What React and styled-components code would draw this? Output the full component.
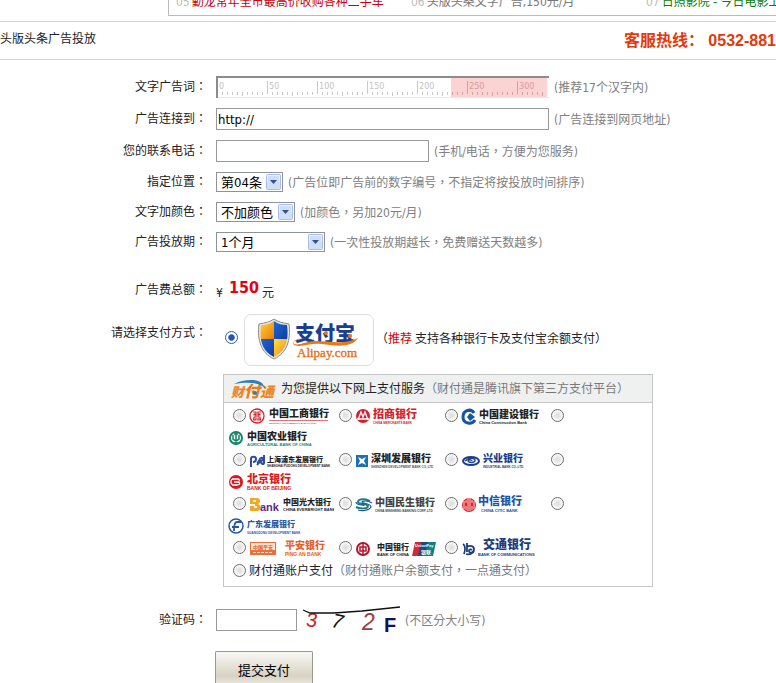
import React, { useState } from "react";
import styled, { createGlobalStyle } from "styled-components";

const GlobalStyle = createGlobalStyle`
  * {
    box-sizing: border-box;
  }
  body {
    margin: 0;
    background: #fff;
    color: #222;
    font-family: "DejaVu Sans Condensed", "Open Sans", "Noto Sans CJK TC", sans-serif;
    font-size: 12px;
    line-height: 16px;
    overflow-x: hidden;
  }
  input, select, button {
    font-family: inherit;
  }
`;

const Page = styled.div`
  overflow: hidden;
  white-space: nowrap;
`;

const AdStrip = styled.div`
  display: grid;
  grid-template-columns: repeat(3, 235px);
  align-content: end;
  height: 16px;
  margin-left: 168px;
  padding: 0 0 5px 7px;
  border: 1px solid #bbb;
  border-width: 0 0 1px 1px;
`;

const AdLink = styled.a`
  display: flex;
  gap: 2px;
  color: ${(props) => props.color};
  text-decoration: none;
`;

const AdNumber = styled.span`
  color: #bbb;
`;

const TitleBar = styled.header`
  display: flex;
  justify-content: space-between;
  align-items: center;
  height: 39px;
  margin-top: 5px;
  border: 1px solid #d5d5d5;
  border-width: 1px 0;
`;

const Title = styled.h1`
  margin: 0 0 4px;
  font-size: 12px;
  font-weight: normal;
`;

const Hotline = styled.strong`
  color: #e23a0c;
  font-family: "Liberation Sans", "Noto Sans CJK SC", sans-serif;
  font-size: 16px;
  line-height: 20px;
`;

const Form = styled.form`
  display: flex;
  flex-direction: column;
  gap: 10px;
  padding: 16px 0;
`;

const Row = styled.div`
  display: grid;
  grid-template-columns: 207px 1fr;
  column-gap: 9px;
  align-items: ${(props) => props.$align || "center"};
  margin-top: ${(props) => props.$top || 0}px;
`;

const Label = styled.label`
  padding-top: ${(props) => props.$top || 0}px;
  text-align: right;
`;

const Field = styled.div`
  display: flex;
  align-items: center;
  gap: 5px;
`;

const Hint = styled.span`
  padding-top: 1px;
  color: #808080;
`;

const TextInput = styled.input`
  width: ${(props) => props.$width}px;
  height: 22px;
  padding: 0 1px;
  border: 1px solid #999;
  border-radius: 0;
  background: #fff;
  color: #000;
  font-size: 13px;
`;

const Stack = styled.span`
  display: inline-grid;
  align-items: center;
  > * {
    grid-area: 1 / 1;
  }
`;

const RulerInput = styled(TextInput)`
  border: 0 solid #8c8c8c;
  border-width: 2px 0 0 2px;
  background: transparent;
`;

const RulerSvg = styled.svg`
  margin: 2px 0 0 2px;
`;

const Select = styled.select`
  appearance: none;
  width: ${(props) => props.$width}px;
  height: 20px;
  padding: 0 20px 0 4px;
  border: 1px solid #8e9299;
  border-radius: 0;
  background: #fff;
  color: #000;
  font-size: 13px;
`;

const SelectArrow = styled.svg`
  justify-self: end;
  margin-right: 2px;
  pointer-events: none;
`;

const Total = styled.div`
  display: flex;
  align-items: center;
  gap: 3px;
  height: 26px;
`;

const Currency = styled.span`
  padding-top: 5px;
`;

const Price = styled.strong`
  padding: 0 0 5px 3px;
  color: #e60012;
  font-size: 16px;
  line-height: 18px;
`;

const AlipayRow = styled.div`
  display: flex;
  align-items: center;
`;

const Radio = styled.input`
  appearance: none;
  flex: none;
  width: 13px;
  height: 13px;
  margin: 0 3px 0 5px;
  border: 1px solid #6c6c6c;
  border-radius: 50%;
  background: radial-gradient(#e2e2e2 20%, #fff 75%);
  &:checked {
    border-color: #3c5a96;
    background: radial-gradient(#2456b4 35%, #fff 48%);
  }
`;

const AlipayRadio = styled(Radio)`
  margin: 0 6px 6px 9px;
`;

const AlipayCard = styled.label`
  display: flex;
  width: 130px;
  height: 52px;
  border: 1px solid #ddd;
  border-radius: 7px;
`;

const Note = styled.span`
  padding: 0 0 3px 2px;
`;

const Red = styled.span`
  margin-right: 3px;
  color: #d60000;
`;

const Panel = styled.section`
  max-width: 430px;
  margin: 8px 0 0 7px;
  border: 1px solid #c6c6c6;
`;

const PanelHeader = styled.div`
  display: flex;
  align-items: center;
  height: 28px;
  padding-left: 6px;
  border-bottom: 1px solid #c6c6c6;
  background: #eff1f0;
`;

const Gray = styled.span`
  color: #777;
`;

const BankRow = styled.div`
  display: flex;
  flex-wrap: wrap;
  padding: 0 5px 0 4px;
`;

const BankList = styled.div`
  padding-top: 2px;
`;

const RadioCell = styled.span`
  display: flex;
  align-items: center;
  height: 22px;
  padding-bottom: 1px;
`;

const LogoLabel = styled.label`
  display: flex;
  width: 85px;
  height: 22px;
`;

const AccountRow = styled.div`
  display: flex;
  align-items: center;
  height: 27px;
  padding: 0 4px 4px;
`;

const SubmitButton = styled.button`
  justify-self: start;
  width: 98px;
  height: 36px;
  margin-left: -1px;
  border: 1px solid #9a9890;
  border-radius: 1px;
  background: linear-gradient(#f8f7f4, #e4e0d6 45%, #d8d2c2 70%, #efece4);
  color: #000;
  font-size: 13px;
`;

function Ruler() {
  const ticks = Array.from({ length: 65 }, (_, i) => i * 5 + 4);
  return (
    <RulerSvg width="331" height="20" aria-hidden="true">
      <path d="M0 19.5H331" stroke="#e8e8e8" />
      <rect x="233" y="0" width="96" height="19" fill="#fbd3d3" />
      {ticks.map((x) => {
        const major = (x + 1) % 50 === 0;
        return (
          <rect
            key={x}
            x={x}
            y={major ? 3 : 14}
            width="1"
            height={major ? 13 : (x + 1) % 25 === 0 ? 4 : 3}
            fill={x > 233 ? "#d8a0a0" : "#c8c8c8"}
          />
        );
      })}
      {[0, 50, 100, 150, 200, 250, 300].map((n) => (
        <text
          key={n}
          x={n + 1}
          y="11"
          fontSize="9"
          fontFamily="DejaVu Sans Condensed, Open Sans, sans-serif"
          fill={n > 240 ? "#d79c9c" : "#c4c4c4"}
        >
          {n}
        </text>
      ))}
    </RulerSvg>
  );
}

function Dropdown({ id, width, options }) {
  return (
    <Stack>
      <Select id={id} $width={width}>
        {options.map((option) => (
          <option key={option}>{option}</option>
        ))}
      </Select>
      <SelectArrow width="15" height="16">
        <rect x="0.5" y="0.5" width="14" height="15" rx="1" fill="#cfdefb" stroke="#a9bdeb" />
        <path d="M1.5 8V1.5H13.5V8" fill="none" stroke="#e9f0fe" />
        <path d="M4 6H11L7.5 10Z" fill="#33508c" />
      </SelectArrow>
    </Stack>
  );
}

function AlipayLogo() {
  return (
    <svg width="128" height="50" role="img" aria-label="支付宝 Alipay.com">
      <defs>
        <linearGradient id="gold" x2="1" y2="1">
          <stop stopColor="#ffe04a" />
          <stop offset="1" stopColor="#f07a00" />
        </linearGradient>
        <linearGradient id="blue" x2="1" y2="1">
          <stop stopColor="#2468dc" />
          <stop offset="1" stopColor="#0a3a9c" />
        </linearGradient>
        <clipPath id="shield">
          <path d="M29 6C25 9 20 10 16 10C14 25 17 36 29 42C41 36 44 25 42 10C38 10 33 9 29 6Z" />
        </clipPath>
      </defs>
      <path
        d="M29 4C25 7 20 8 14 9C12 25 16 38 29 44C42 38 46 25 44 9C38 8 33 7 29 4Z"
        fill="#e8e8e8"
        stroke="#888"
      />
      <g clipPath="url(#shield)">
        <rect x="13" y="4" width="16" height="20" fill="url(#gold)" />
        <rect x="29" y="4" width="16" height="20" fill="url(#blue)" />
        <rect x="13" y="24" width="16" height="20" fill="url(#blue)" />
        <rect x="29" y="24" width="16" height="20" fill="url(#gold)" />
      </g>
      <text
        x="50"
        y="26"
        fontSize="20"
        fontWeight="900"
        fontFamily="Noto Sans CJK SC, sans-serif"
        fill="#173f94"
      >
        支付宝
      </text>
      <path
        d="M60 24C54 24 47 26 49 29C54 31 62 26 70 26C86 26 100 30 113 23C107 33 91 31 76 29C65 28 56 33 49 30C46 26 53 23 60 24"
        fill="#e97817"
      />
      <circle cx="81" cy="18" r="2" fill="#e97817" />
      <circle cx="105" cy="21" r="2" fill="#e97817" />
      <text x="52" y="42" fontSize="13" fontFamily="Liberation Serif, serif" fill="#e46a12" stroke="#e46a12" strokeWidth="0.3">
        Alipay.com
      </text>
    </svg>
  );
}

function TenpayLogo() {
  return (
    <svg width="51" height="24" role="img" aria-label="财付通">
      <g fontFamily="Noto Sans CJK SC, sans-serif" fontWeight="900" fontStyle="italic">
        <text x="1" y="20" fontSize="13" fill="#ee8422">
          财
        </text>
        <text x="14" y="20" fontSize="16" fill="#ee7a18">
          付
        </text>
        <text x="30" y="20" fontSize="14" fill="#ee8422">
          通
        </text>
      </g>
      <path d="M4 7C12 3 26 1 32 6L36 12C30 5 18 5 4 7Z" fill="#2c7fb8" />
      <circle cx="25" cy="16" r="2" fill="#2c7fb8" />
    </svg>
  );
}

// Name and English line shared by the bank logos
function BankText({ x, size = 10, y = 13, color = "#222", name, en, enColor, enSize = 4, enX, enY = 19 }) {
  return (
    <>
      <text x={x} y={y} fontSize={size} fontWeight="900" fontFamily="Noto Sans CJK SC, sans-serif" fill={color}>
        {name}
      </text>
      <text
        x={enX || x}
        y={enY}
        fontSize={enSize}
        fontWeight="bold"
        fontFamily="Liberation Sans, sans-serif"
        fill={enColor || color}
      >
        {en}
      </text>
    </>
  );
}

const bankRows = [
  [
    {
      id: "icbc",
      label: "中国工商银行",
      logo: (
        <>
          <circle cx="8" cy="11" r="7" fill="none" stroke="#d3212d" strokeWidth="1.3" />
          <path d="M4 7H7V9H5V10H7V12H5V14H4M12 7H9V9H11V10H9V12H11V14H12M4 15H7V13M12 15H9V13" fill="none" stroke="#d3212d" strokeWidth="1.2" />
          <path d="M20 15.5H79" stroke="#e0707a" />
          <BankText x={20} y={12} name="中国工商银行" en="INDUSTRIAL AND COMMERCIAL BANK OF CHINA" enSize={2} enColor="#666" />
        </>
      ),
    },
    {
      id: "cmb",
      label: "招商银行",
      logo: (
        <>
          <circle cx="8" cy="11" r="7" fill="#d3212d" />
          <path d="M3 15L6 7L8 12L10 7L13 15M2 14H14" fill="none" stroke="#fff" strokeWidth="1.3" />
          <BankText x={18} size={11} y={13} color="#d3212d" name="招商银行" en="CHINA MERCHANTS BANK" enSize={3} />
        </>
      ),
    },
    {
      id: "ccb",
      label: "中国建设银行",
      logo: (
        <>
          <path d="M13 8C10 3 2 5 2 12C2 19 11 20 14 15" fill="none" stroke="#1456a0" strokeWidth="3" />
          <path d="M6 4H11V7H6ZM9 8L14 12L9 16L6 12Z" fill="#1456a0" />
          <BankText x={18} name="中国建设银行" en="China Construction Bank" />
        </>
      ),
    },
    {
      id: "abc",
      label: "中国农业银行",
      logo: (
        <>
          <circle cx="8" cy="11" r="6" fill="none" stroke="#12866a" strokeWidth="2" />
          <path d="M8 4V18M5 8V12L8 14L11 12V8M6 7H10M6 16H10" fill="none" stroke="#12866a" strokeWidth="1.5" />
          <BankText x={19} name="中国农业银行" en="AGRICULTURAL BANK OF CHINA" enColor="#12866a" />
        </>
      ),
    },
  ],
  [
    {
      id: "spdb",
      label: "上海浦东发展银行",
      logo: (
        <>
          <path
            d="M2 18V10C2 7 7 7 7 10C7 13 5 13 4 13M8 13C10 14 10 10 12 9C14 8 15 11 12 12C10 13 9 15 8 16M15 6V14C15 16 12 15 12 13"
            fill="none"
            stroke="#2d4ea0"
            strokeWidth="2"
          />
          <BankText x={18} size={7} y={13} name="上海浦东发展银行" en="SHANGHAI PUDONG DEVELOPMENT BANK" enSize={3} enY={18} />
        </>
      ),
    },
    {
      id: "sdb",
      label: "深圳发展银行",
      logo: (
        <>
          <rect x="1" y="6" width="12" height="12" fill="#1c6fb4" />
          <path d="M3 8L7 10L11 8L9 12L11 16L7 14L3 16L5 12Z" fill="#fff" />
          <BankText x={16} name="深圳发展银行" en="SHENZHEN DEVELOPMENT BANK CO.,LTD" enSize={3} enColor="#555" />
        </>
      ),
    },
    {
      id: "cib",
      label: "兴业银行",
      logo: (
        <>
          <ellipse cx="10" cy="12" rx="8" ry="4" fill="none" stroke="#193f8c" strokeWidth="2" />
          <path d="M4 12C8 8 15 9 14 12C13 14 8 14 7 12C8 10 11 11 11 12" fill="none" stroke="#193f8c" strokeWidth="1.5" />
          <BankText x={22} color="#193f8c" name="兴业银行" en="INDUSTRIAL BANK CO.,LTD." enSize={3} />
        </>
      ),
    },
    {
      id: "bob",
      label: "北京银行",
      logo: (
        <>
          <circle cx="8" cy="11" r="7" fill="#d71920" />
          <path d="M4 8H10C12 8 12 11 9 11H6M9 11C13 11 12 14 9 14H4M4 8C2 11 3 13 5 14" fill="none" stroke="#fff" strokeWidth="1.3" />
          <BankText x={19} size={11} y={12} color="#d71920" name="北京银行" en="BANK OF BEIJING" enSize={5} />
        </>
      ),
    },
  ],
  [
    {
      id: "ceb",
      label: "中国光大银行",
      logo: (
        <>
          <path d="M1 5H8C12 5 12 10 9 11C13 12 12 18 8 18H1V13H6V11H1Z" fill="#efa928" />
          <path d="M4 8H7M5 14H8" stroke="#fff" strokeWidth="1.5" />
          <text x="11" y="18" fontSize="11" fontWeight="bold" fontFamily="Liberation Sans, sans-serif" fill="#5c2a80">
            ank
          </text>
          <BankText x={34} size={8} y={12} name="中国光大银行" en="CHINA EVERBRIGHT BANK" enY={18} enSize={4} />
        </>
      ),
    },
    {
      id: "cmbc",
      label: "中国民生银行",
      logo: (
        <>
          <path d="M15 8C10 5 3 6 3 9C4 12 12 10 13 13C13 16 5 16 1 14" fill="none" stroke="#177d87" strokeWidth="2" />
          <path d="M17 10C12 7 7 8 7 9C8 11 16 10 16 14C14 18 6 18 3 17M1 9C1 13 9 11 9 13" fill="none" stroke="#1c5797" strokeWidth="1.2" />
          <BankText x={20} color="#444" name="中国民生银行" en="CHINA MINSHENG BANKING CORP.,LTD" enSize={3} />
        </>
      ),
    },
    {
      id: "citic",
      label: "中信银行",
      logo: (
        <>
          <circle cx="8" cy="12" r="7" fill="#df2128" />
          <path d="M3 8V16M5 7V10M5 13V17M7 5V18M9 5V18M11 7V10M11 13V17M13 8V16" stroke="#fff" strokeWidth="0.8" />
          <BankText x={17} size={11} y={12} color="#1d55a5" name="中信银行" en="CHINA CITIC BANK" enX={20} />
        </>
      ),
    },
    {
      id: "gdb",
      label: "广东发展银行",
      logo: (
        <>
          <circle cx="8" cy="11" r="7" fill="none" stroke="#2657a5" strokeWidth="1.5" />
          <path d="M13 7H9C7 7 6 10 6 16M4 12H11" fill="none" stroke="#2657a5" strokeWidth="1.8" />
          <BankText x={19} size={8} y={12} color="#2657a5" name="广东发展银行" en="GUANGDONG DEVELOPMENT BANK" enSize={3} />
        </>
      ),
    },
  ],
  [
    {
      id: "pingan",
      label: "平安银行",
      logo: (
        <>
          <rect x="1" y="5" width="26" height="13" fill="#e8703a" />
          <rect x="2" y="6" width="24" height="7" fill="#fbe3d6" />
          <text x="4" y="12" fontSize="5" fontWeight="bold" fontFamily="Noto Sans CJK SC, sans-serif" fill="#e05a20">
            中国平安
          </text>
          <path d="M4 15.5H24" stroke="#fbd8c8" strokeDasharray="3 1" />
          <BankText x={36} y={12} color="#e2622a" name="平安银行" en="PING AN BANK" enSize={5} />
        </>
      ),
    },
    {
      id: "boc",
      label: "中国银行",
      logo: (
        <>
          <circle cx="8" cy="12" r="6" fill="none" stroke="#b5152c" strokeWidth="2" />
          <path d="M8 5V19M5 10H11V14H5Z" fill="none" stroke="#b5152c" strokeWidth="1.5" />
          <BankText x={22} size={8} y={13} name="中国银行" en="BANK OF CHINA" />
          <path d="M60 5H67L64 19H57Z" fill="#cf2a3a" />
          <path d="M66 5H74L71 19H63Z" fill="#21477f" />
          <path d="M73 5H81L78 19H70Z" fill="#117f80" />
          <text x="60" y="10" fontSize="4" fontWeight="bold" fontFamily="Liberation Sans, sans-serif" fill="#fff">
            UnionPay
          </text>
          <text x="66" y="17" fontSize="5" fontWeight="bold" fontFamily="Noto Sans CJK SC, sans-serif" fill="#fff">
            银联
          </text>
        </>
      ),
    },
    {
      id: "bocom",
      label: "交通银行",
      logo: (
        <>
          <path d="M2 7C5 9 4 14 3 17M6 6V15M6 10C9 8 13 9 13 12C13 16 8 17 8 14C8 12 10 12 11 13M5 17C8 18 12 17 13 14" fill="none" stroke="#1e3c7c" strokeWidth="1.8" />
          <BankText x={22} size={12} y={12} color="#1e3c7c" name="交通银行" en="BANK OF COMMUNICATIONS" enX={17} />
        </>
      ),
    },
  ],
];

function Captcha() {
  return (
    <svg width="98" height="30" role="img" aria-label="验证码">
      <g fontFamily="Liberation Sans, sans-serif" fontStyle="italic">
        <text x="4" y="22" fontSize="20" fill="#c0242c">
          3
        </text>
        <text x="30" y="23" fontSize="20" fill="#111" transform="rotate(12 35 16)">
          7
        </text>
        <text x="60" y="25" fontSize="23" fill="#9c4040">
          2
        </text>
        <text x="82" y="27" fontSize="20" fill="#16105c" fontWeight="bold" fontStyle="normal">
          F
        </text>
      </g>
      <path d="M1 5L8 8H32L60 6L98 2" fill="none" stroke="#111" strokeWidth="1.3" />
    </svg>
  );
}

function App() {
  const [payment, setPayment] = useState("alipay");
  const [url, setUrl] = useState("http://");

  const radioProps = (value) => ({
    type: "radio",
    name: "payment",
    id: value,
    value,
    checked: payment === value,
    onChange: () => setPayment(value),
  });

  return (
    <Page>
      <GlobalStyle />
      <AdStrip>
        <AdLink href="#" color="#c80010">
          <AdNumber>05</AdNumber>勤龙常年全市最高价收购各种二手车
        </AdLink>
        <AdLink href="#" color="#777">
          <AdNumber>06</AdNumber>头版头条文字广告,150元/月
        </AdLink>
        <AdLink href="#" color="#0a7a0a">
          <AdNumber>07</AdNumber>日照影院 - 今日电影上
        </AdLink>
      </AdStrip>
      <TitleBar>
        <Title>头版头条广告投放</Title>
        <Hotline>客服热线： 0532-881</Hotline>
      </TitleBar>
      <Form onSubmit={(event) => event.preventDefault()}>
        <Row>
          <Label htmlFor="words">文字广告词：</Label>
          <Field>
            <Stack>
              <Ruler />
              <RulerInput id="words" type="text" $width={333} />
            </Stack>
            <Hint>(推荐17个汉字内)</Hint>
          </Field>
        </Row>
        <Row>
          <Label htmlFor="url">广告连接到：</Label>
          <Field>
            <TextInput
              id="url"
              type="text"
              $width={333}
              value={url}
              onChange={(event) => setUrl(event.target.value)}
            />
            <Hint>(广告连接到网页地址)</Hint>
          </Field>
        </Row>
        <Row>
          <Label htmlFor="phone">您的联系电话：</Label>
          <Field>
            <TextInput id="phone" type="text" $width={213} />
            <Hint>(手机/电话，方便为您服务)</Hint>
          </Field>
        </Row>
        <Row>
          <Label htmlFor="position">指定位置：</Label>
          <Field>
            <Dropdown id="position" width={67} options={["第04条"]} />
            <Hint>(广告位即广告前的数字编号，不指定将按投放时间排序)</Hint>
          </Field>
        </Row>
        <Row>
          <Label htmlFor="color">文字加颜色：</Label>
          <Field>
            <Dropdown id="color" width={79} options={["不加颜色"]} />
            <Hint>(加颜色，另加20元/月)</Hint>
          </Field>
        </Row>
        <Row>
          <Label htmlFor="period">广告投放期：</Label>
          <Field>
            <Dropdown id="period" width={109} options={["1个月"]} />
            <Hint>(一次性投放期越长，免费赠送天数越多)</Hint>
          </Field>
        </Row>
        <Row $top={15}>
          <Label as="span">广告费总额：</Label>
          <Total>
            <Currency>¥</Currency>
            <Price>150</Price>
            <Currency>元</Currency>
          </Total>
        </Row>
        <Row $align="start" $top={1}>
          <Label as="span" $top={11}>
            请选择支付方式：
          </Label>
          <div>
            <AlipayRow>
              <AlipayRadio {...radioProps("alipay")} />
              <AlipayCard htmlFor="alipay">
                <AlipayLogo />
              </AlipayCard>
              <Note>
                （<Red>推荐</Red>支持各种银行卡及支付宝余额支付）
              </Note>
            </AlipayRow>
            <Panel>
              <PanelHeader>
                <TenpayLogo />
                <span>为您提供以下网上支付服务</span>
                <Gray>（财付通是腾讯旗下第三方支付平台）</Gray>
              </PanelHeader>
              <BankList>
                {bankRows.map((banks) => (
                  <BankRow key={banks[0].id}>
                    {banks.map((bank) => (
                      <React.Fragment key={bank.id}>
                        <RadioCell>
                          <Radio {...radioProps(bank.id)} />
                        </RadioCell>
                        <LogoLabel htmlFor={bank.id}>
                          <svg width="85" height="22" role="img" aria-label={bank.label}>
                            {bank.logo}
                          </svg>
                        </LogoLabel>
                      </React.Fragment>
                    ))}
                  </BankRow>
                ))}
              </BankList>
              <AccountRow>
                <Radio {...radioProps("account")} />
                <label htmlFor="account">财付通账户支付</label>
                <Gray>（财付通账户余额支付，一点通支付）</Gray>
              </AccountRow>
            </Panel>
          </div>
        </Row>
        <Row $top={8}>
          <Label htmlFor="code">验证码：</Label>
          <Field>
            <TextInput id="code" type="text" $width={81} />
            <Captcha />
            <Hint>(不区分大小写)</Hint>
          </Field>
        </Row>
        <Row $top={6}>
          <span />
          <SubmitButton type="submit">提交支付</SubmitButton>
        </Row>
      </Form>
    </Page>
  );
}

export default App;
